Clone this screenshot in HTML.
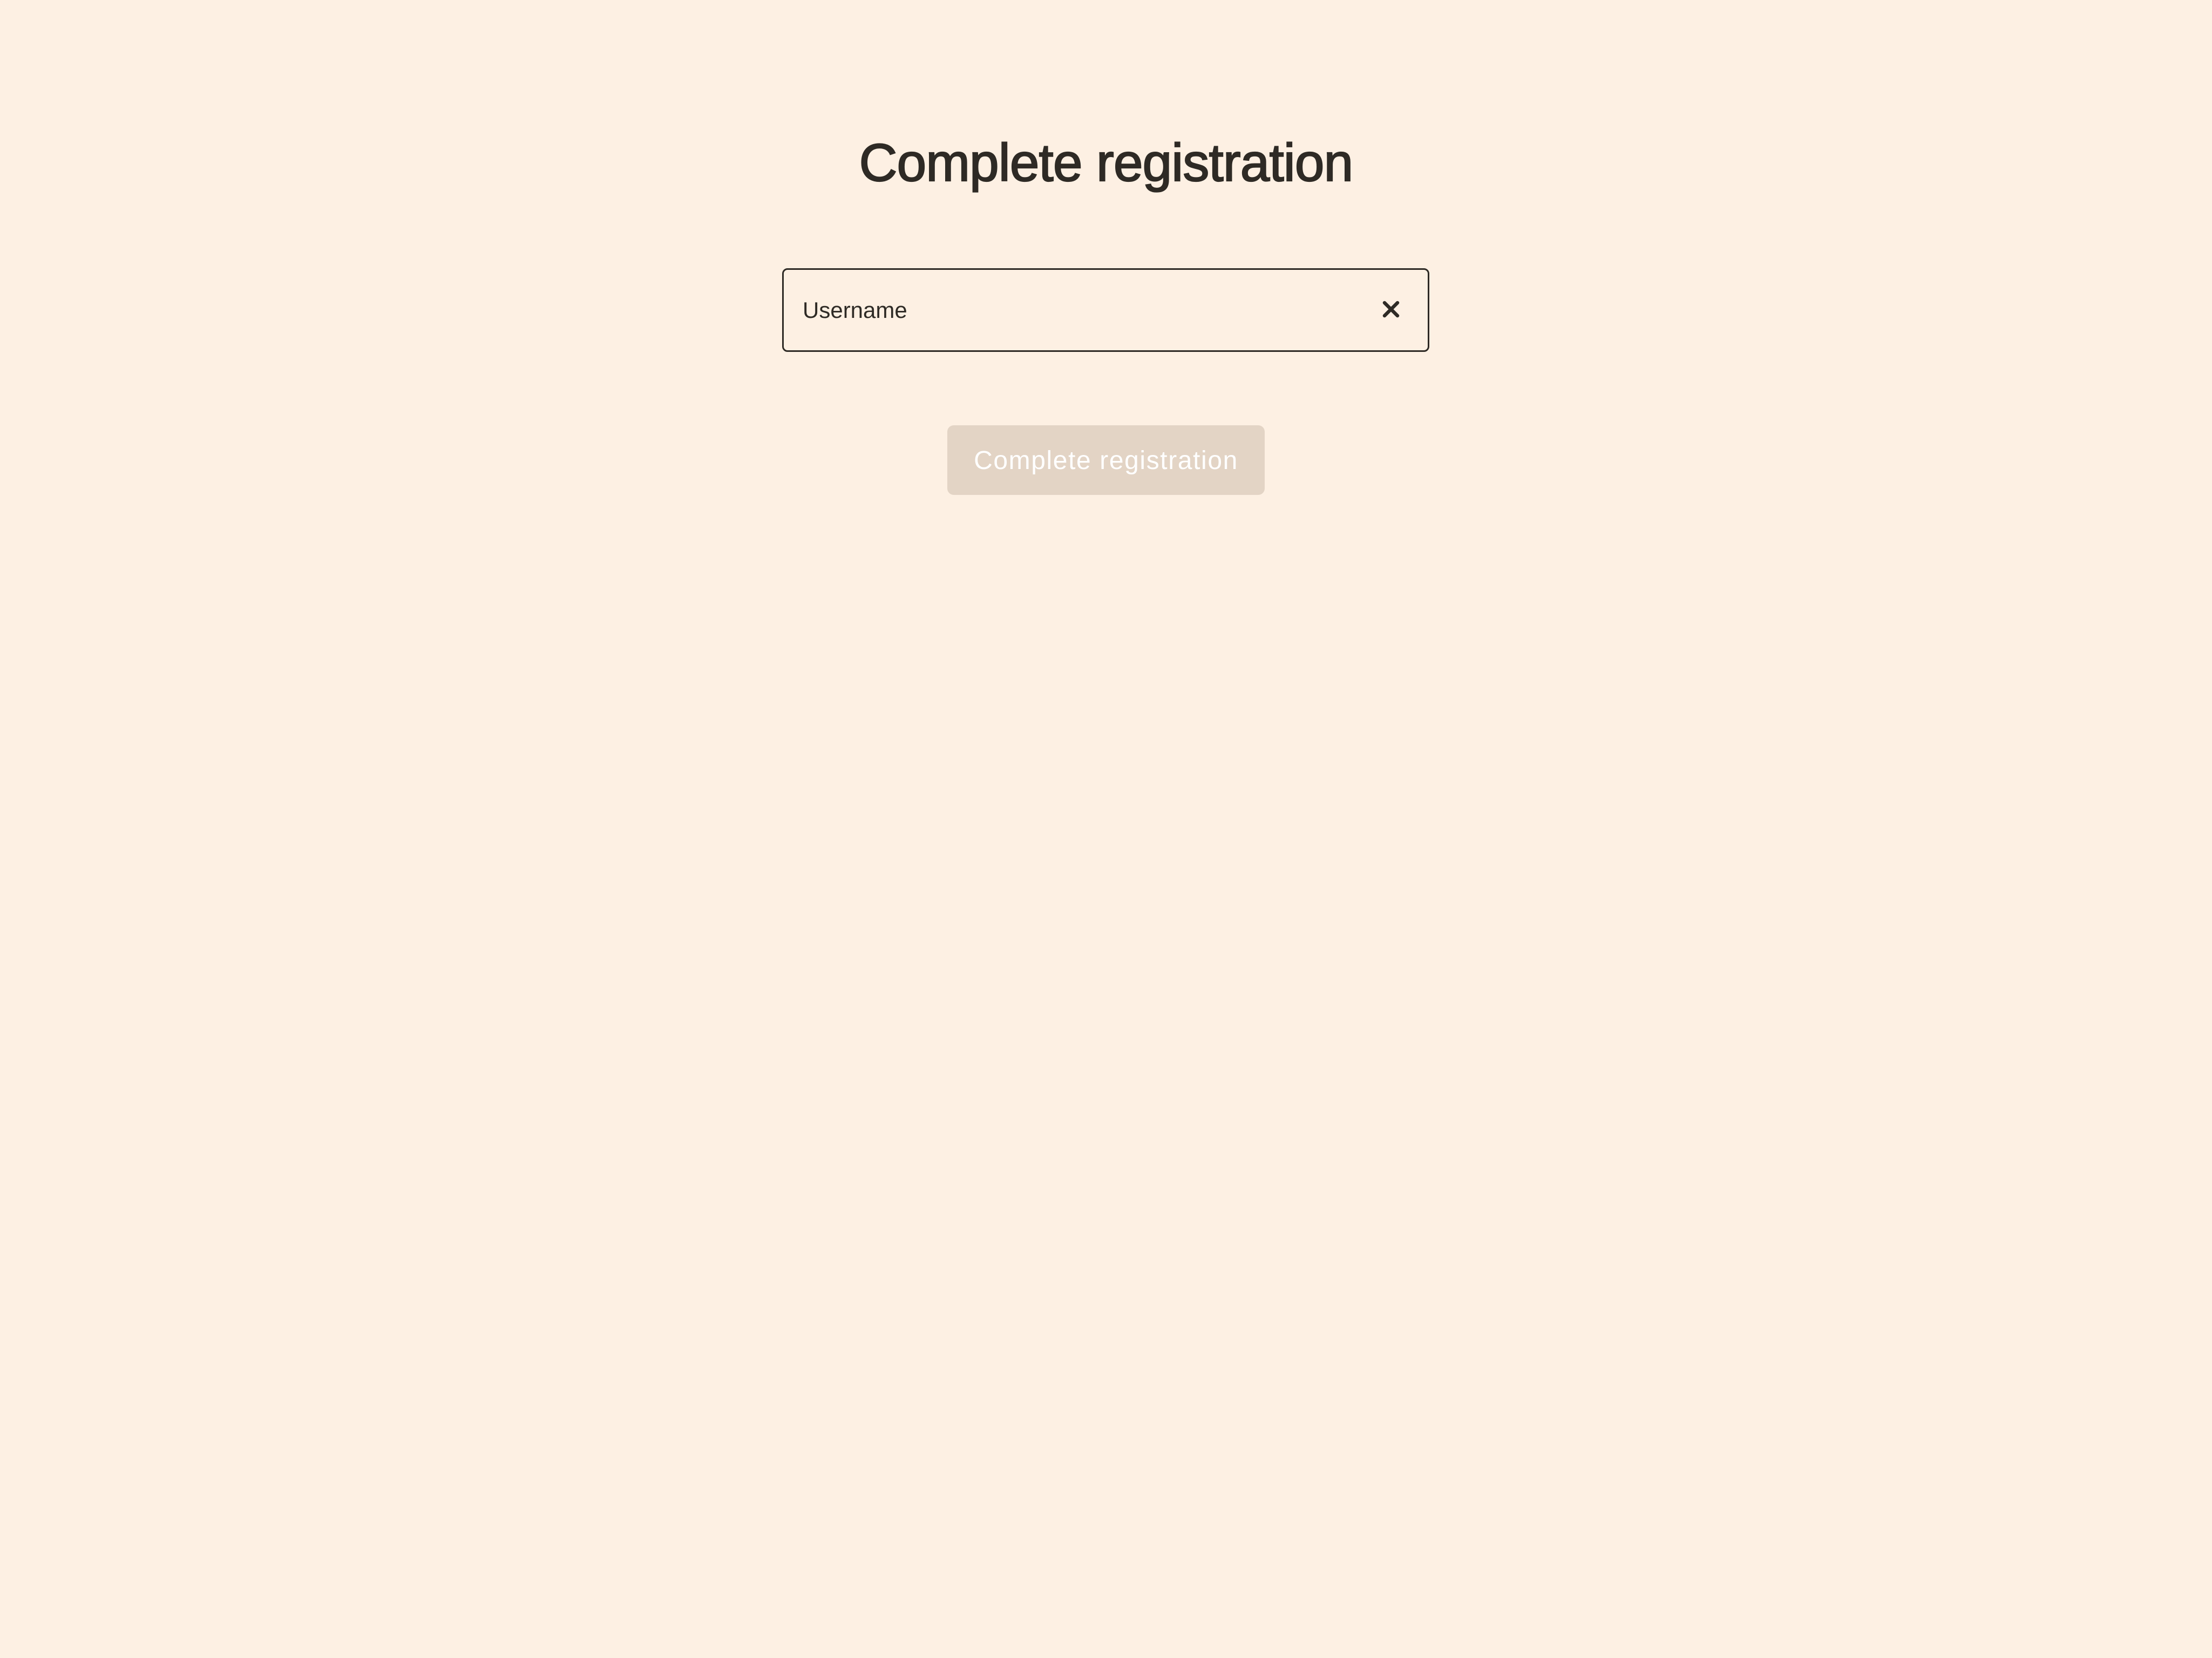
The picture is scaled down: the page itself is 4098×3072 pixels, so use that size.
<!DOCTYPE html>
<html><head><meta charset="utf-8"><style>
html,body{margin:0;padding:0;}
body{width:4098px;height:3072px;background:#fdf0e3;position:relative;overflow:hidden;font-family:"Liberation Sans",Arial,sans-serif;}
.title{position:absolute;left:0;width:4098px;top:241px;text-align:center;font-size:98px;line-height:120px;color:#2e2a25;-webkit-text-stroke:2.2px #2e2a25;letter-spacing:-0.8px;}
.input{position:absolute;left:1449px;top:497px;width:1193px;height:149px;border:3px solid #2e2a25;border-radius:10px;box-sizing:content-box;}
.label{position:absolute;left:1487px;top:553px;font-size:42px;line-height:44px;color:#2e2a25;}
.x{position:absolute;left:2558px;top:554px;}
.btn{position:absolute;left:1755px;top:788px;width:588px;height:129px;background:#e3d4c5;border-radius:12px;}
.btntxt{position:absolute;left:1755px;width:588px;top:826px;text-align:center;font-size:48px;line-height:56px;color:#fff;letter-spacing:1.6px;}
</style></head><body>
<div class="title">Complete registration</div>
<div class="input"></div>
<div class="label">Username</div>
<svg class="x" width="38" height="38" viewBox="0 0 38 38"><path d="M7 7 L31 31 M31 7 L7 31" stroke="#2e2a25" stroke-width="6.5" stroke-linecap="round" fill="none"/></svg>
<div class="btn"></div>
<div class="btntxt">Complete registration</div>
</body></html>
